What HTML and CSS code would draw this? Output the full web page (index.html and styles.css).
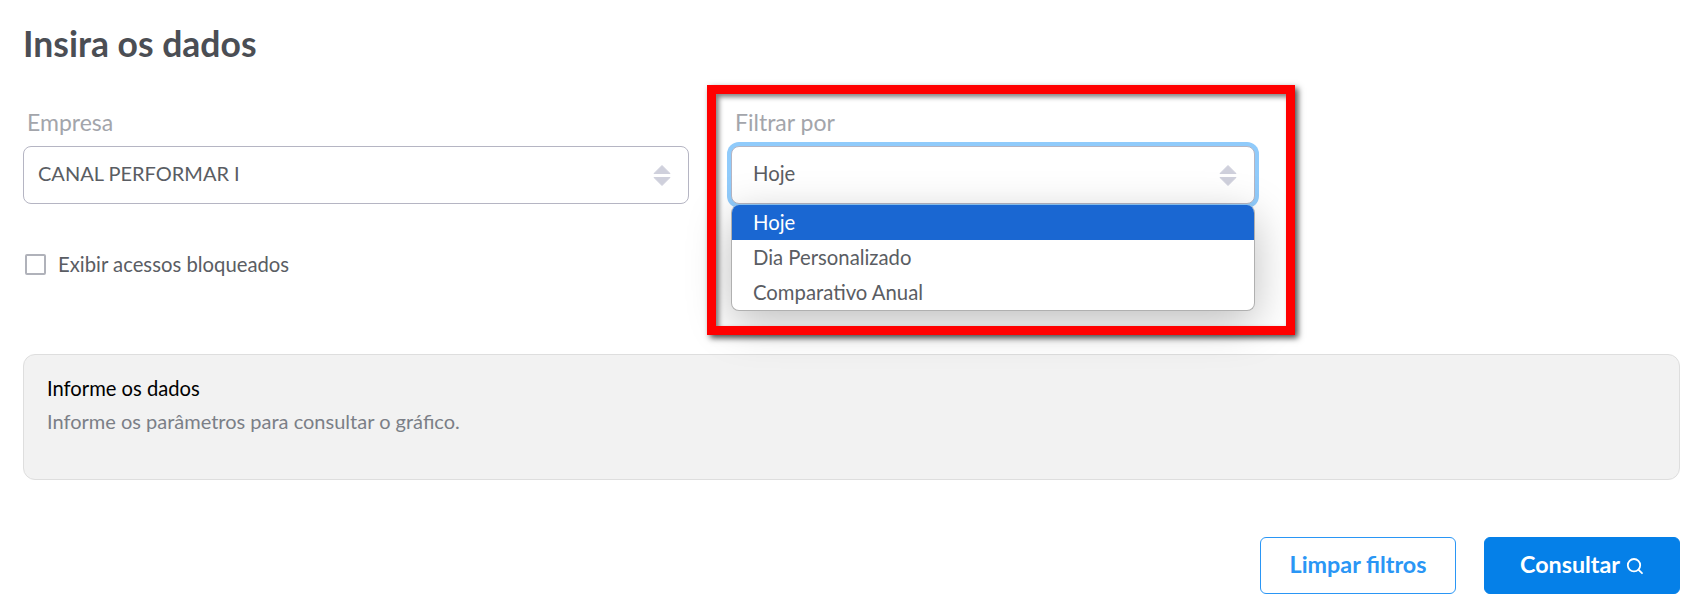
FILE: index.html
```html
<!DOCTYPE html>
<html>
  <head>
    <meta name="viewport" content="width=device-width, initial-scale=1.0">
    <title>Insira os dados</title>
    <link rel="stylesheet" href="styles.css">
  </head>
  <body>
    <main class="page">
      <h1 class="page-title">Insira os dados</h1>

      <div class="form-row">
        <div class="form-col">
          <label class="field-label">Empresa</label>
          <div class="select-box">
            <span class="select-value select-value-company">CANAL PERFORMAR I</span>
            <svg class="select-arrows" width="18" height="21" viewBox="0 0 18 21"><path d="M9 0.5 L17 8.5 H1 Z M1 12.5 H17 L9 20.5 Z" fill="#cfd0dc" stroke="#cfd0dc" stroke-linejoin="round"/></svg>
          </div>
          <label class="check-row">
            <span class="check-box"></span>
            <span class="check-text">Exibir acessos bloqueados</span>
          </label>
        </div>

        <div class="form-col form-col-filter">
          <label class="field-label">Filtrar por</label>
          <div class="select-box select-box-focus">
            <span class="select-value">Hoje</span>
            <svg class="select-arrows" width="18" height="21" viewBox="0 0 18 21"><path d="M9 0.5 L17 8.5 H1 Z M1 12.5 H17 L9 20.5 Z" fill="#cfd0dc" stroke="#cfd0dc" stroke-linejoin="round"/></svg>
            <ul class="select-menu">
              <li class="select-option select-option-active">Hoje</li>
              <li class="select-option">Dia Personalizado</li>
              <li class="select-option">Comparativo Anual</li>
            </ul>
          </div>
          <div class="highlight-frame"></div>
        </div>
      </div>

      <section class="info-box">
        <h2 class="info-title">Informe os dados</h2>
        <p class="info-text">Informe os parâmetros para consultar o gráfico.</p>
      </section>

      <div class="actions">
        <button class="btn btn-outline"><span class="btn-label">Limpar filtros</span></button>
        <button class="btn btn-primary"><span class="btn-label">Consultar</span>
          <svg class="btn-icon" width="18" height="18" viewBox="0 0 18 18" fill="none" stroke="#fff" stroke-width="1.8" stroke-linecap="round"><circle cx="8" cy="8.2" r="6.2"/><path d="M12.6 12.8 L16 16.2"/></svg>
        </button>
      </div>
    </main>
  </body>
</html>
```

FILE: styles.css
```css
* {
  box-sizing: border-box;
}

body {
  margin: 0;
  background-color: #fff;
  font-family: "Lato", "Noto Sans", sans-serif;
  overflow: hidden;
}

.page {
  padding: 24px 12px 0 23px;
}

.page-title {
  margin: 0 0 48px;
  color: #4b4e54;
  font-size: 35.5px;
  line-height: 40px;
  font-weight: 700;
}

.form-row {
  display: flex;
  gap: 42px;
}

.form-col {
  width: 666px;
}

.form-col-filter {
  position: relative;
  width: 524px;
}

.field-label {
  display: block;
  height: 34px;
  padding-left: 4px;
  color: #a3a5ab;
  font-size: 23px;
  line-height: 20px;
}

.select-box {
  position: relative;
  display: flex;
  align-items: center;
  justify-content: space-between;
  height: 58px;
  padding: 0 17px 0 14px;
  border: 1px solid #b5b5c3;
  border-radius: 8px;
  background-color: #fff;
}

.select-box-focus {
  padding: 0 17px 0 21px;
  border-color: #b5b5c3;
  box-shadow: 0 0 0 4px #90cbfb;
}

.select-value {
  padding-bottom: 4px;
  color: #5a5d63;
  font-size: 20.3px;
}

.select-value-company {
  font-size: 20px;
}

.select-arrows {
  display: block;
}

.select-menu {
  position: absolute;
  top: 58px;
  left: -1px;
  z-index: 2;
  width: 524px;
  margin: 0;
  padding: 0;
  list-style: none;
  overflow: hidden;
  border: 1px solid #b0b0b0;
  border-top: none;
  border-radius: 8px;
  background-color: #fff;
  box-shadow: 0 12px 44px rgba(0, 0, 0, 0.26);
}

.select-option {
  height: 35px;
  padding-left: 21px;
  color: #5a5d63;
  font-size: 20.3px;
  line-height: 35px;
}

.select-option-active {
  background-color: #1a67d2;
  color: #fff;
}

.highlight-frame {
  position: absolute;
  top: -27px;
  left: -24px;
  z-index: 3;
  width: 588px;
  height: 250px;
  border: 9px solid #f00;
  box-shadow: 3px 3px 6px rgba(0, 0, 0, 0.7), inset 3px 3px 5px rgba(0, 0, 0, 0.5);
}

.check-row {
  display: flex;
  align-items: center;
  gap: 12px;
  margin-top: 48px;
  padding-left: 2px;
}

.check-box {
  width: 21px;
  height: 21px;
  border: 2px solid #b0b2ba;
  border-radius: 2px;
}

.check-text {
  color: #5a5d63;
  font-size: 20.3px;
}

.info-box {
  width: 1657px;
  height: 126px;
  margin-top: 78px;
  padding: 21px 23px;
  border: 1px solid #dedede;
  border-radius: 12px;
  background-color: #f2f2f2;
}

.info-title {
  margin: 0;
  color: #000;
  font-size: 20.2px;
  line-height: 24px;
  font-weight: 400;
}

.info-text {
  margin: 9px 0 0;
  color: #7b7f87;
  font-size: 20px;
  line-height: 24px;
}

.actions {
  display: flex;
  justify-content: flex-end;
  gap: 28px;
  margin-top: 57px;
}

.btn {
  display: flex;
  align-items: center;
  justify-content: center;
  gap: 6px;
  width: 196px;
  height: 57px;
  padding: 0 0 3px;
  border-radius: 6px;
  font-family: inherit;
  font-size: 23.3px;
  font-weight: 700;
}

.btn-outline {
  border: 1px solid #2a96f5;
  background-color: #fff;
  color: #2a96f5;
}

.btn-primary {
  border: 1px solid #0580e8;
  background-color: #0580e8;
  color: #fff;
}

.btn-icon {
  margin-top: 4px;
}
```
